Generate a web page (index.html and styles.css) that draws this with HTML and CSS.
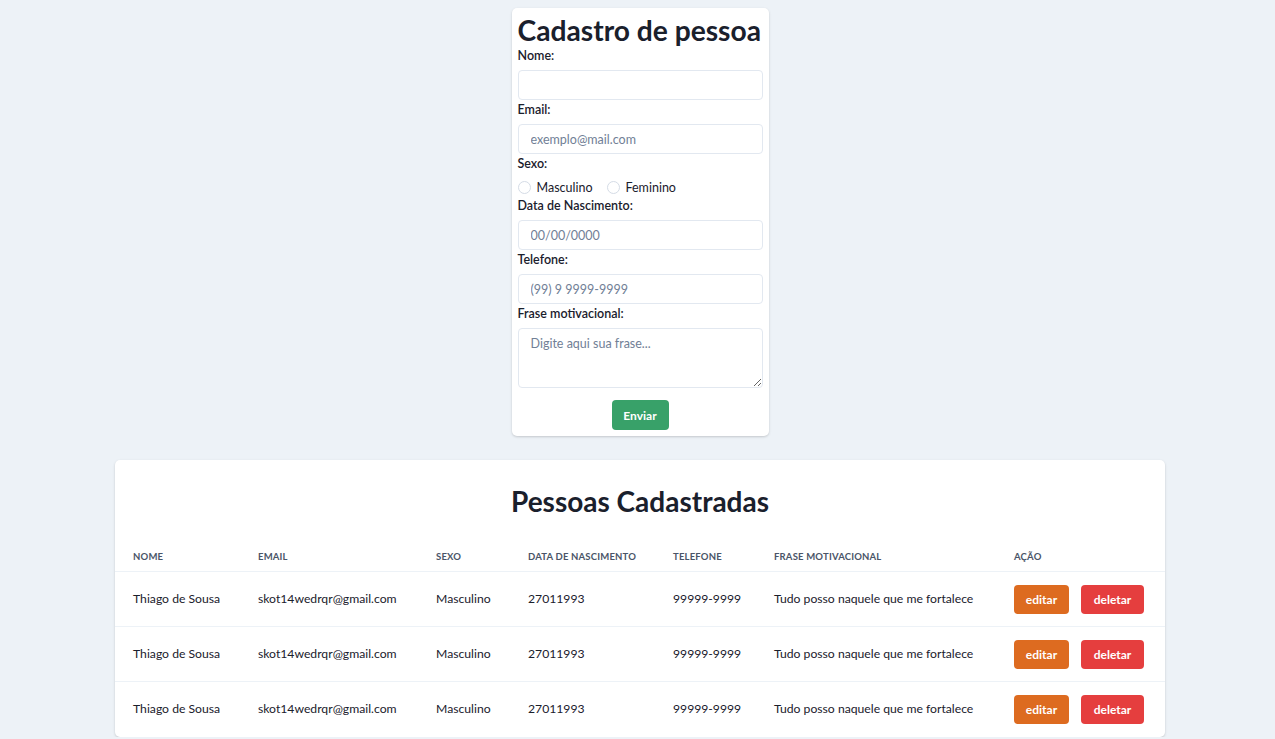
FILE: index.html
```html
<!DOCTYPE html>
<html lang="pt-BR">
<head>
<meta charset="utf-8">
<title>Cadastro de pessoa</title>
<link rel="stylesheet" href="styles.css">
</head>
<body>
<main class="page">
  <form class="form-card">
    <h1 class="form-title">Cadastro de pessoa</h1>
    <label class="field-label" for="nome">Nome:</label>
    <input class="field-input" id="nome" type="text">
    <label class="field-label" for="email">Email:</label>
    <input class="field-input" id="email" type="text" placeholder="exemplo@mail.com">
    <span class="field-label">Sexo:</span>
    <div class="radio-row">
      <label class="radio-option"><input class="radio" type="radio" name="sexo"> Masculino</label>
      <label class="radio-option"><input class="radio" type="radio" name="sexo"> Feminino</label>
    </div>
    <label class="field-label" for="nasc">Data de Nascimento:</label>
    <input class="field-input" id="nasc" type="text" placeholder="00/00/0000">
    <label class="field-label" for="tel">Telefone:</label>
    <input class="field-input" id="tel" type="text" placeholder="(99) 9 9999-9999">
    <label class="field-label" for="frase">Frase motivacional:</label>
    <textarea class="field-textarea" id="frase" placeholder="Digite aqui sua frase..."></textarea>
    <div class="submit-row">
      <button class="btn btn-green" type="button">Enviar</button>
    </div>
  </form>

  <section class="table-card">
    <h2 class="table-title">Pessoas Cadastradas</h2>
    <table class="people">
      <colgroup>
        <col style="width:125px"><col style="width:178px"><col style="width:92px"><col style="width:145px"><col style="width:101px"><col style="width:240px"><col style="width:169px">
      </colgroup>
      <thead>
        <tr><th>Nome</th><th>Email</th><th>Sexo</th><th>Data de Nascimento</th><th>Telefone</th><th>Frase Motivacional</th><th>Ação</th></tr>
      </thead>
      <tbody>
        <tr><td>Thiago de Sousa</td><td>skot14wedrqr@gmail.com</td><td>Masculino</td><td>27011993</td><td>99999-9999</td><td>Tudo posso naquele que me fortalece</td><td><div class="actions"><button class="btn btn-orange" type="button">editar</button><button class="btn btn-red" type="button">deletar</button></div></td></tr>
        <tr><td>Thiago de Sousa</td><td>skot14wedrqr@gmail.com</td><td>Masculino</td><td>27011993</td><td>99999-9999</td><td>Tudo posso naquele que me fortalece</td><td><div class="actions"><button class="btn btn-orange" type="button">editar</button><button class="btn btn-red" type="button">deletar</button></div></td></tr>
        <tr><td>Thiago de Sousa</td><td>skot14wedrqr@gmail.com</td><td>Masculino</td><td>27011993</td><td>99999-9999</td><td>Tudo posso naquele que me fortalece</td><td><div class="actions"><button class="btn btn-orange" type="button">editar</button><button class="btn btn-red" type="button">deletar</button></div></td></tr>
      </tbody>
    </table>
  </section>
</main>
</body>
</html>
```

FILE: styles.css
```css
* { box-sizing: border-box; }

html, body {
  margin: 0;
  background: #edf2f7;
  font-family: Lato, "Noto Sans", sans-serif;
  color: #1a202c;
}

.page {
  padding: 8px 0 0 5px;
  display: flex;
  flex-direction: column;
  align-items: center;
}

.form-card {
  width: 257px;
  background: #fff;
  border-radius: 5px;
  padding: 6px;
  box-shadow: 0 1px 3px rgba(0,0,0,0.12), 0 1px 2px rgba(0,0,0,0.06);
  display: flex;
  flex-direction: column;
}

.form-title {
  margin: 0;
  font-size: 28.2px;
  line-height: 32px;
  font-weight: 700;
  white-space: nowrap;
  color: #1a202c;
}

.field-label {
  display: block;
  font-size: 12.5px;
  line-height: 20px;
  font-weight: 600;
  color: #1a202c;
  margin-bottom: 4px;
}

.field-input {
  display: block;
  width: 100%;
  height: 30px;
  border: 1px solid #e2e8f0;
  border-radius: 4px;
  padding: 0 12px;
  font-family: inherit;
  font-size: 12.5px;
  color: #2d3748;
  outline: none;
}

.field-input::placeholder,
.field-textarea::placeholder { color: #718096; }

.radio-row {
  display: flex;
  align-items: center;
  gap: 14px;
  height: 18px;
}

.radio-option {
  display: flex;
  align-items: center;
  gap: 6px;
  font-size: 12.5px;
  color: #1a202c;
}

.radio {
  appearance: none;
  -webkit-appearance: none;
  margin: 0;
  width: 13px;
  height: 13px;
  border: 1px solid #d5dce6;
  border-radius: 50%;
  background: #fff;
}

.field-textarea {
  display: block;
  width: 100%;
  height: 60px;
  border: 1px solid #e2e8f0;
  border-radius: 4px;
  padding: 7px 12px;
  font-family: inherit;
  font-size: 12.5px;
  color: #2d3748;
  outline: none;
}

.submit-row {
  display: flex;
  justify-content: center;
  margin-top: 12px;
}

.btn {
  border: 0;
  border-radius: 4px;
  color: #fff;
  font-family: inherit;
  font-weight: 700;
  font-size: 12px;
  cursor: pointer;
}

.btn-green {
  background: #38a169;
  height: 30px;
  width: 57px;
}

.btn-orange { background: #dd6b20; height: 29px; width: 55px; }
.btn-red { background: #e53e3e; height: 29px; width: 63px; }

.table-card {
  margin-top: 24px;
  width: 1050px;
  background: #fff;
  border-radius: 5px;
  box-shadow: 0 1px 3px rgba(0,0,0,0.12), 0 1px 2px rgba(0,0,0,0.06);
}

.table-title {
  margin: 23px 0 22px;
  text-align: center;
  font-size: 28px;
  line-height: 36px;
  font-weight: 700;
  color: #1a202c;
}

.people {
  width: 100%;
  border-collapse: collapse;
  table-layout: fixed;
}

.people th {
  text-align: left;
  font-size: 9.5px;
  line-height: 11px;
  font-weight: 700;
  letter-spacing: 0.02em;
  text-transform: uppercase;
  color: #4a5568;
  padding: 10px 0 9px 18px;
}

.people td {
  border-top: 1px solid #edf2f7;
  font-size: 12.2px;
  line-height: 18px;
  color: #1a202c;
  padding: 12px 0 12px 18px;
  height: 55px;
  white-space: nowrap;
}

.actions {
  display: flex;
  gap: 12px;
}
```
